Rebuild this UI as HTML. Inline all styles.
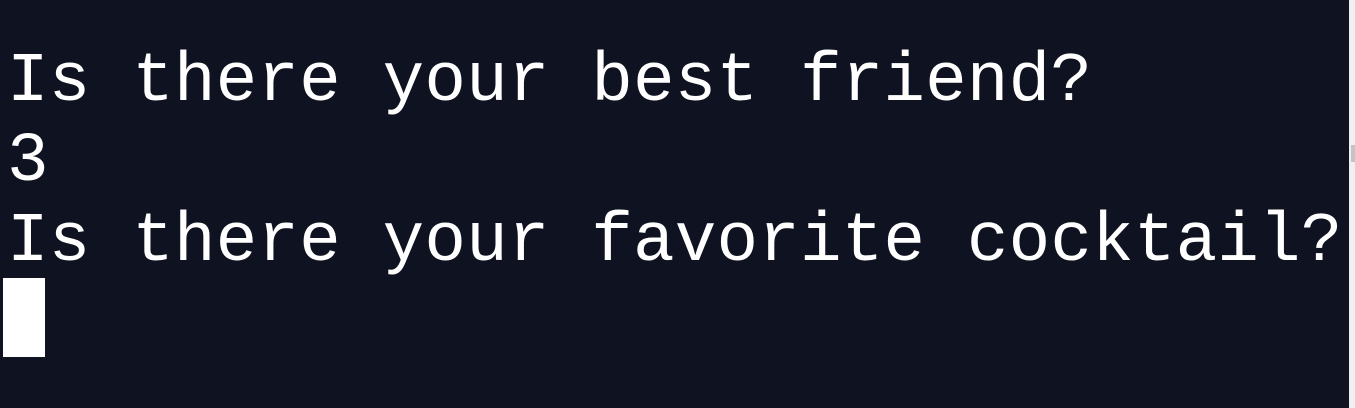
<!DOCTYPE html>
<html><head><style>
html,body{margin:0;padding:0;width:1355px;height:408px;overflow:hidden;background:#0f1220;}
.t{position:absolute;left:7px;font-family:"Courier New","Nimbus Mono PS","Liberation Mono",monospace;font-size:69.3px;letter-spacing:0.15px;color:#fff;white-space:pre;line-height:80px;}
.sb{position:absolute;left:1349px;top:0;width:6px;height:408px;background:#f0f0f0;}
.th{position:absolute;left:1351px;top:145px;width:4px;height:17px;background:#c4c4c4;}
.cur{position:absolute;left:3px;top:278px;width:42px;height:79px;background:#fff;}
</style></head><body>
<div class="t" style="top:42px">Is there your best friend?
3
Is there your favorite cocktail?</div>
<div class="cur"></div>
<div class="sb"></div><div class="th"></div>
</body></html>
